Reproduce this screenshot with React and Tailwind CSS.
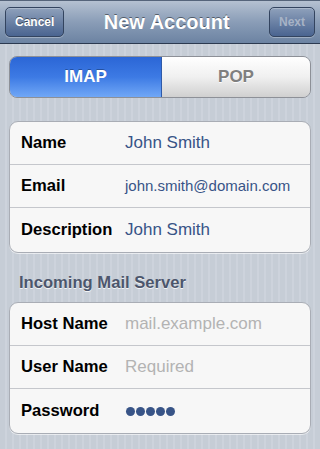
import React from "react";

const font = { fontFamily: '"Liberation Sans", Arial, sans-serif' };

const NavButton = ({ label, disabled }) => (
  <div
    className={`h-[30px] px-[9px] flex items-center rounded-[5px] border border-[#33445f] bg-gradient-to-b from-[#8fa1bb] to-[#4a6490] shadow-[inset_0_1px_0_rgba(255,255,255,0.25),0_1px_0_rgba(255,255,255,0.3)] text-[12px] font-bold ${
      disabled ? "text-[#a7b3c6]" : "text-white [text-shadow:0_-1px_0_rgba(0,0,0,0.5)]"
    }`}
  >
    {label}
  </div>
);

const Row = ({ label, children, last }) => (
  <div className={`flex items-center ${last ? "h-[44px]" : "h-[43px] border-b border-[#c5c7cc]"}`}>
    <div className="w-[115px] pl-[11px] shrink-0 text-[16.6px] font-bold text-black">{label}</div>
    <div className="flex-1">{children}</div>
  </div>
);

const Card = ({ children }) => (
  <div className="mx-[9px] rounded-[9px] border border-[#a9adb5] bg-[#f7f7f7] overflow-hidden shadow-[0_1px_0_rgba(255,255,255,0.6)]">
    {children}
  </div>
);

export default function App() {
  return (
    <div
      style={font}
      className="w-[320px] h-[449px] overflow-hidden bg-[repeating-linear-gradient(90deg,#c6cdd6_0px,#c6cdd6_5px,#cdd3dc_5px,#cdd3dc_7px)]"
    >
      <div className="h-[44px] flex items-center px-[5px] border-t border-t-[#55647a] border-b border-b-[#2c3a50] bg-gradient-to-b from-[#b5c1d1] via-[#8a9db7] to-[#6c83a2]">
        <NavButton label="Cancel" />
        <div className="flex-1 text-center text-[20px] font-bold text-white [text-shadow:0_-1px_0_rgba(0,0,0,0.45)]">
          New Account
        </div>
        <NavButton label="Next" disabled />
      </div>

      <div className="mt-[12px] mx-[9px] h-[42px] flex rounded-[8px] border border-[#8d9097] overflow-hidden">
        <div className="w-[152px] flex items-center justify-center border-r border-[#2f5aa8] bg-gradient-to-b from-[#2b66d6] via-[#3d7ae4] to-[#70a7f6] text-[17px] font-bold text-white [text-shadow:0_-1px_0_rgba(0,0,0,0.3)]">
          IMAP
        </div>
        <div className="flex-1 flex items-center justify-center bg-gradient-to-b from-[#ffffff] via-[#f0f0f0] to-[#d0d0d0] text-[17px] font-bold text-[#7f7f7f] [text-shadow:0_1px_0_rgba(255,255,255,0.9)]">
          POP
        </div>
      </div>

      <div className="mt-[23px]">
        <Card>
          <Row label="Name">
            <span className="text-[17px] text-[#385487]">John Smith</span>
          </Row>
          <Row label="Email">
            <span className="text-[15px] text-[#385487]">john.smith@domain.com</span>
          </Row>
          <Row label="Description" last>
            <span className="text-[17px] text-[#385487]">John Smith</span>
          </Row>
        </Card>
      </div>

      <div className="mt-[20px] mb-[9px] pl-[19px] h-[20px] flex items-center text-[16.6px] font-bold text-[#4c566c] [text-shadow:0_1px_0_rgba(255,255,255,0.8)]">
        Incoming Mail Server
      </div>

      <Card>
        <Row label="Host Name">
          <span className="text-[17px] text-[#b3b3b3]">mail.example.com</span>
        </Row>
        <Row label="User Name">
          <span className="text-[17px] text-[#b3b3b3]">Required</span>
        </Row>
        <Row label="Password" last>
          <div className="flex gap-[1px] pl-[1px]">
            {[0, 1, 2, 3, 4].map((i) => (
              <span key={i} className="w-[9px] h-[9px] rounded-full bg-[#385487]" />
            ))}
          </div>
        </Row>
      </Card>
    </div>
  );
}
